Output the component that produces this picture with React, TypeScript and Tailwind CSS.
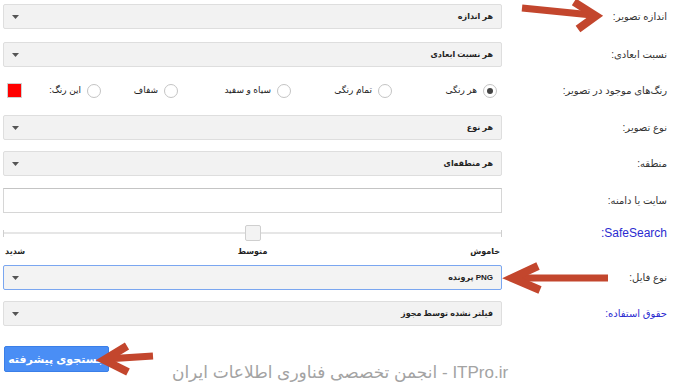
import React from "react";

const FONT = "font-['Liberation_Sans','DejaVu_Sans',sans-serif]";

function Caret() {
  return (
    <svg width="7" height="4" viewBox="0 0 7 4" aria-hidden="true">
      <path d="M0 0 L7 0 L3.5 4 Z" fill="#555" />
    </svg>
  );
}

function Select({ value, active = false }: { value?: string; active?: boolean }) {
  return (
    <div
      className={`flex h-[25px] w-full items-center justify-between rounded-[2px] border pl-[8px] pr-[8px] ${
        active ? "border-[#7aa6f0] bg-[#f3f3f3]" : "border-[#dedede] bg-[#f2f2f2]"
      }`}
    >
      <span className="text-[8px] font-bold text-[#222]">{value}</span>
      <Caret />
    </div>
  );
}

function Row({
  label,
  blue = false,
  latin = false,
  className = "",
  children
}: {
  label: string;
  blue?: boolean;
  latin?: boolean;
  className?: string;
  children: React.ReactNode;
}) {
  return (
    <div className={`flex items-center ${className}`}>
      <div
        className={`w-[176px] shrink-0 pr-[11px] text-right ${latin ? "text-[12px]" : "text-[10px]"} ${
          blue ? "text-[#2b2bd0]" : "text-[#333]"
        }`}
      >
        {label}
      </div>
      <div className="w-[499px] shrink-0">{children}</div>
    </div>
  );
}

function Radio({ label, checked = false, width }: { label: string; checked?: boolean; width: string }) {
  return (
    <div className={`flex shrink-0 items-center gap-[6px] ${width}`}>
      <span className="flex h-[14px] w-[14px] items-center justify-center rounded-full border border-[#c4c4c4] bg-white">
        {checked ? <span className="h-[6px] w-[6px] rounded-full bg-[#444]" /> : null}
      </span>
      <span className="text-[9px] text-[#222]">{label}</span>
    </div>
  );
}

function Arrow({ d, tail }: { d: string; tail: string }) {
  return (
    <>
      <path d={tail} stroke="#c3462d" strokeWidth="7" fill="none" strokeLinecap="butt" />
      <path d={d} stroke="#c3462d" strokeWidth="8" fill="none" strokeLinejoin="miter" strokeLinecap="butt" />
    </>
  );
}

export default function App() {
  return (
    <div dir="rtl" className={`relative h-[392px] w-[678px] overflow-hidden bg-white pl-[3px] ${FONT}`}>
      <div className="flex flex-col">
        <Row label="اندازه تصویر:" className="mt-[4px]">
          <Select value="هر اندازه" />
        </Row>
        <Row label="نسبت ابعادی:" className="mt-[13px]">
          <Select value="هر نسبت ابعادی" />
        </Row>
        <Row label="رنگ‌های موجود در تصویر:" className="mt-[11px] h-[25px]">
          <div className="flex items-center pr-[5px]">
            <Radio label="هر رنگی" checked width="w-[105px]" />
            <Radio label="تمام رنگی" width="w-[101px]" />
            <Radio label="سیاه و سفید" width="w-[113px]" />
            <Radio label="شفاف" width="w-[77px]" />
            <Radio label="این رنگ:" width="w-[68px]" />
            <span className="ml-[4px] mr-auto h-[15px] w-[15px] border border-[#d0d0d0] bg-[#ff0000]" />
          </div>
        </Row>
        <Row label="نوع تصویر:" className="mt-[12px]">
          <Select value="هر نوع" />
        </Row>
        <Row label="منطقه:" className="mt-[11px]">
          <Select value="هر منطقه‌ای" />
        </Row>
        <Row label="سایت یا دامنه:" className="mt-[12px]">
          <div className="h-[25px] w-full border border-[#d6d6d6] border-t-[#c4c4c4] bg-white" />
        </Row>
        <Row label="SafeSearch:" blue latin className="mt-[8px] h-[24px]">
          <div className="flex h-[24px] items-center">
            <span className="h-[7px] w-px bg-[#cfcfcf]" />
            <span className="h-[2px] flex-1 bg-[#e6e6e6]" />
            <span className="h-[16px] w-[16px] rounded-[2px] border border-[#cfcfcf] bg-[#f3f3f3]" />
            <span className="h-[2px] flex-1 bg-[#e6e6e6]" />
            <span className="h-[7px] w-px bg-[#cfcfcf]" />
          </div>
        </Row>
        <div className="flex h-[14px] items-center">
          <div className="w-[176px] shrink-0" />
          <div className="grid w-[499px] grid-cols-3 text-[8px] font-bold text-[#222]">
            <span className="pr-[2px] text-right">خاموش</span>
            <span className="text-center">متوسط</span>
            <span className="pl-[2px] text-left">شدید</span>
          </div>
        </div>
        <Row label="نوع فایل:" className="mt-[6px]">
          <Select value="PNG پرونده" active />
        </Row>
        <Row label="حقوق استفاده:" blue className="mt-[11px]">
          <Select value="فیلتر نشده توسط مجوز" />
        </Row>
        <div className="mt-[20px] flex justify-end">
          <button
            type="button"
            className="ml-[1px] flex h-[26px] w-[105px] items-center justify-center rounded-[2px] border border-[#3a7fe8] bg-[#4a8ef5] text-[11px] font-bold text-white"
          >
            جستجوی پیشرفته
          </button>
        </div>
      </div>

      <div className="pointer-events-none absolute left-[165px] top-[360px] w-[350px] text-center text-[17px] text-[#a3a3a3]">
        ITPro.ir - انجمن تخصصی فناوری اطلاعات ایران
      </div>

      <svg className="pointer-events-none absolute left-0 top-0" width="678" height="392" viewBox="0 0 678 392">
        <Arrow tail="M522 8 L592 15" d="M574 2 L596 16 L578 29" />
        <Arrow tail="M608 278 L514 278" d="M538 266 L512 278 L540 290" />
        <Arrow tail="M153 356 L106 359" d="M127 346 L104 360 L128 372" />
      </svg>
    </div>
  );
}
